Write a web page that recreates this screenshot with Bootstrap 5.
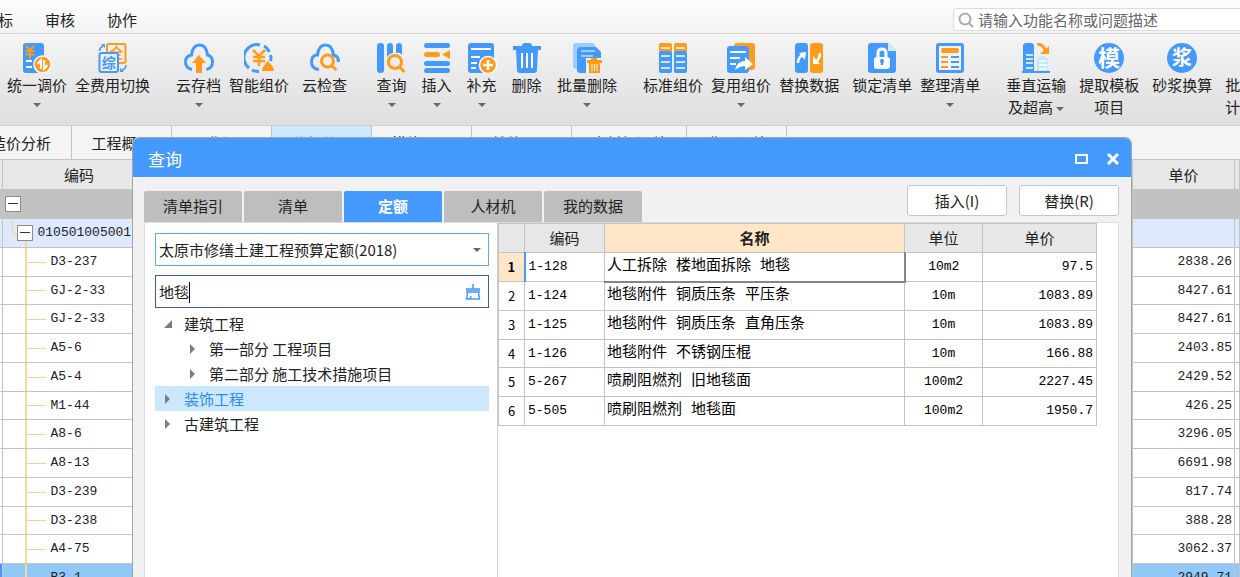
<!DOCTYPE html>
<html lang="zh-CN">
<head>
<meta charset="utf-8">
<meta name="viewport" content="width=device-width, initial-scale=1">
<title>查询</title>
<link href="https://cdn.jsdelivr.net/npm/bootstrap@5.3.0/dist/css/bootstrap.min.css" rel="stylesheet">
<style>
:root{--blue:#4499ff;--orange:#ff9a1a;--line:#c3c3c3}
body{font:15px/22px "Noto Sans CJK SC",sans-serif;color:#222;background:#fff}
button,input,select{font:inherit;color:inherit}
.plain{border:0;background:none;padding:0}
.menubar{height:34px;background:linear-gradient(#fcfcfc,#f3f3f3);border-bottom:1px solid #d5d5d5}
.menubar a{color:#222;text-decoration:none;margin-right:32px;padding-top:9px}
.menubar a:first-child{margin-left:-2px}
.finder{width:287px;height:23px;background:#fff;border:1px solid #dcdcdc;border-right:0;border-radius:4px 0 0 4px;margin-top:8px}
.finder input{background:none;border:0;outline:0;padding:0;height:21px}
.finder input::placeholder{color:#666;opacity:1}
.ribbon{height:92px;padding:9px 0 0 7px;background:linear-gradient(#f4f4f4,#dedede);border-bottom:1px solid #d0d0d0}
.tool{min-width:45px;white-space:nowrap;flex:none}
.tool svg{width:30px;height:30px;display:block;margin:0 auto 1px}
.tool .words{display:block}
.drop{display:inline-block;border:4px solid transparent;border-top-color:#666;border-bottom:0;vertical-align:middle}
.tool>.drop{display:block;width:0;margin:7px auto 0}
.g1{margin-left:8px}.g2{margin-left:13px}.g3{margin-left:22px}.g4{margin-left:26px}
svg{fill:none}
.b{fill:var(--blue)}.o{fill:var(--orange)}.w{fill:#fff}
.bs{stroke:var(--blue)}.os{stroke:var(--orange)}.ws{stroke:#fff}
.sheets{height:33px;background:#f4f4f4}
.sheets button{width:100px;border-right:1px solid #c4c4c4;white-space:nowrap;flex:none}
.sheets .first{width:72px;padding-right:20px;display:flex;justify-content:flex-end;align-items:center}
.sheets .wide{width:115px}
.sheets .on{background:#cce8ff;color:#2b88ff}
.cells{border-collapse:collapse;table-layout:fixed;width:100%}
.cells th,.cells td{border:1px solid var(--line);padding:0 4px;height:29px;line-height:20px;overflow:hidden;white-space:nowrap;font-weight:400}
.cells tr:nth-child(4n) td{height:28px}
.cells th{background:#e7e7e7;text-align:center}
.cells td{font-family:"Liberation Mono","Noto Sans CJK SC",monospace;font-size:13px}
.cells .r{text-align:right}
.cells .c{text-align:center}
.cells .hot{background:#ffe6c6}
.cost th{height:30px}
.cost th:first-child,.cost td:first-child{border-left:0;padding:0}
.cost .r{padding-right:2px}
.cost .grp td{background:#c2c2c2}
.cost .lv1 td{background-color:#dde9fd}
.cost .sel td{background-color:#92c8f7}
.cost .sel td:first-child{background:var(--blue)}
.cost .leaf{padding-left:48px;background:linear-gradient(#fcd5a0,#fcd5a0) 22px 0/2px 100% no-repeat,linear-gradient(#ffcf90,#ffcf90) 23px 50%/20px 1px no-repeat}
.cost .branch{padding-left:14px;background:linear-gradient(#fcd090,#fcd090) 9px 0/1px 50% no-repeat,linear-gradient(#fcd090,#fcd090) 9px 50%/6px 1px no-repeat,linear-gradient(#fcd5a0,#fcd5a0) 22px 100%/2px 40% no-repeat}
.cost .root{padding-left:2px}
.twist{width:16px;height:16px;background:#fff;border:1px solid #8c8c8c;padding:0 2px;display:inline-flex;align-items:center;vertical-align:middle;margin-right:5px}
.twist::before{content:"";width:10px;height:1px;background:#333}
.dialog-box{position:absolute;left:132px;right:108px;top:137px;bottom:0;border:1px solid #a3a3a3;border-bottom:0;border-radius:7px 7px 0 0;background:#f1f1f1;overflow:hidden}
.title-strip{height:39px;background:var(--blue);color:#fff;padding:3px 11px 0 15px;font-size:17px}
.title-strip svg{width:14px;height:14px;display:block}
.title-strip .gap-end{margin-right:18px}
.inner{padding:8px 12px 0 11px}
.pages{gap:2px;padding-top:6px}
.pages button{width:98px;height:31px;background:#bebebe;border-radius:2px 2px 0 0;padding-bottom:2px}
.pages .on{background:var(--blue);color:#fff;font-weight:700}
.act{width:100px;height:31px;background:#fff;border:1px solid #c6c6c6;border-radius:3px}
.pane{background:#fff;border:2px solid #dcdcdc;border-width:1px 1px 0 1px}
.side{width:353px;padding:10px 8px 0 10px;border-right:1px solid #d0d0d0;flex:none}
.picker{margin-bottom:9px}
.entry{display:block;width:100%;height:33px;border:1px solid #5ba6ff;background:#fff;padding:0 3px;border-radius:0;appearance:none;outline:0}
.typed{border-color:#34609f}
.caret{position:absolute;left:34px;top:7px;width:1px;height:21px;background:#000}
.mark-r{position:absolute;right:8px;top:15px}
.brush{position:absolute;right:8px;top:9px;width:16px;height:16px}
.outline-list{margin:3px 0 0;padding:0;list-style:none}
.outline-list li{height:25px;padding-left:8px;display:flex;align-items:center;line-height:25px}
.outline-list .sub{padding-left:33px}
.outline-list .on{background:#cce8ff;color:#2b88ff}
.outline-list svg{width:10px;height:10px;margin-right:11px;fill:#7d7d7d}
.quota{width:599px}
.quota .no{font-family:"Noto Sans CJK SC",sans-serif;text-align:center;background:#fff}
.quota td{color:#000;padding:0 3px}
.quota td.nm{font-size:15px;padding:0 2px}
.quota td.no.hot{background:#ffe6c6;font-weight:700;border-right:2px solid var(--blue)}
.quota td.pick{border:2px solid #858585;border-width:1px 2px 2px 1px;border-top-color:var(--blue)}
</style>
</head>
<body class="vh-100 overflow-hidden position-relative">

<nav class="menubar d-flex align-items-start">
  <a href="#">标</a><a href="#">审核</a><a href="#">协作</a>
  <label class="finder d-flex align-items-center ms-auto ps-1">
    <svg class="me-1" width="16" height="16" viewBox="0 0 16 16" stroke="#aaa" stroke-width="2"><circle cx="7" cy="7" r="5.5"/><path d="M11 11l4 4"/></svg>
    <input class="flex-grow-1" type="text" aria-label="搜索" placeholder="请输入功能名称或问题描述">
  </label>
</nav>

<div class="ribbon d-flex align-items-start overflow-hidden">
  <button class="tool plain"><svg viewBox="0 0 30 30"><rect class="b" x="1" width="21" height="30" rx="3"/><path class="os" stroke-width="2" d="M4 3l4 4 4-4M8 7v8M3.500 8h9M3.500 11.500h9"/><path class="ws" stroke-width="2" d="M4 18h6M4 24h6"/><circle cx="20.500" cy="21.500" r="8.500" class="o ws" stroke-width="1.500"/><path class="ws" stroke-width="2" d="M19 26v-9l-3.500 4M22 17v9l3.500-4"/></svg><span class="words">统一调价</span><i class="drop"></i></button>
  <button class="tool plain g1"><svg viewBox="0 0 30 30"><rect class="os" stroke-width="2" x="9" y="1" width="18.500" height="19" rx="2"/><text x="18.500" y="15" font-size="14" text-anchor="middle" class="o" font-weight="700">全</text><rect x="1.500" y="10" width="18.500" height="19" rx="2" fill="#f0f0f0" class="bs" stroke-width="2"/><text x="10.700" y="24.500" font-size="14" text-anchor="middle" class="b" font-weight="700">综</text><path class="bs" stroke-width="1.500" d="M1.500 8q0-3 3.500-5M28 22q0 4-4 5"/><path class="b" d="M3 1h4v4zM22 29v-4l4 4z"/></svg><span class="words">全费用切换</span></button>
  <button class="tool plain g4"><svg viewBox="0 0 30 30"><path class="bs" stroke-width="3" d="M8 26.500Q1.500 25 1.500 19t6-7q1-10 8-10t8 10q5 1 5 7t-6 7.500"/><path class="o" d="M15 12l7 8h-4v10h-6V20H8z"/></svg><span class="words">云存档</span><i class="drop"></i></button>
  <button class="tool plain g1"><svg viewBox="0 0 30 30"><path class="bs" stroke-width="3" d="M5 25A13 13 0 0 1 16 2M20 3q4 2 5 6M26.500 12q1 3 0 6M8 27q3 1.500 7 1.500"/><path class="os" stroke-width="2.500" d="M9 7l6 6 6-6M15 12v11M9 14h12M9 18h12"/><path class="o" d="M24 18q6 6 6 10H18q0-4 6-10z"/></svg><span class="words">智能组价</span></button>
  <button class="tool plain g2"><svg viewBox="0 0 30 30"><path class="bs" stroke-width="3" d="M9 26.500Q1.500 26 1.500 19t6-7q1-10 8-10t8 10q5 1 5 7"/><circle class="os" stroke-width="3" cx="17.500" cy="18" r="6"/><path class="os" stroke-width="3" d="M21.500 22.500l5 4.500"/></svg><span class="words">云检查</span></button>
  <button class="tool plain g3"><svg viewBox="0 0 30 30"><rect class="b" width="7" height="30" rx="3"/><path class="b" d="M10 3q0-3 3-3t3 3v7q-5 1-6 5zM19 3q0-3 3-3t3 3v9q-2-3-6-2z"/><circle class="os" stroke-width="3" cx="18" cy="19" r="6.500"/><path class="os" stroke-width="3" d="M22.500 24l5 5"/></svg><span class="words">查询</span><i class="drop"></i></button>
  <button class="tool plain"><svg viewBox="0 0 30 30"><g class="b"><rect x="2" width="26" height="5" rx="2.500"/><rect x="2" y="18" width="26" height="5" rx="2.500"/><rect x="2" y="25" width="26" height="5" rx="2.500"/></g><g class="o"><rect x="2" y="9" width="16" height="5" rx="2.500"/><path d="M20 11.500L28 7v9z"/></g></svg><span class="words">插入</span><i class="drop"></i></button>
  <button class="tool plain"><svg viewBox="0 0 30 30"><rect class="b" x="1" width="26" height="30" rx="3"/><path class="ws" stroke-width="2" d="M4 6h20M4 14h9M4 20h6M4 25h5"/><circle class="o ws" stroke-width="1.500" cx="21" cy="22" r="8.500"/><path class="ws" stroke-width="2.500" d="M21 17v10M16 22h10"/></svg><span class="words">补充</span><i class="drop"></i></button>
  <button class="tool plain"><svg viewBox="0 0 30 30"><path class="b" d="M1 3h9q0-3 3-3h4q3 0 3 3h9v4H1zM4 7h22l-1 20q0 3-3 3H8q-3 0-3-3z"/><path class="ws" stroke-width="2" d="M10 10v15M15 10v15M20 10v15"/></svg><span class="words">删除</span></button>
  <button class="tool plain g1"><svg viewBox="0 0 30 30"><path fill="#9dccff" d="M4 0h16q3 0 3 3v2H8q-3 2-2 21H4q-3 0-3-3V3q0-3 3-3z"/><path class="b" d="M9 4h15l5 5v18q0 3-3 3H8q-3 0-3-3V8q0-4 4-4z"/><path d="M9 8h14M9 13h12" stroke="#9dccff" stroke-width="2"/><path d="M14 15h16v15H14z" fill="#f0f0f0"/><path class="o" d="M15 17h4v-2h6v2h5v3H15zM17 20h11v10H17z"/><path class="ws" d="M20 21v7M22.500 21v7M25 21v7"/></svg><span class="words">批量删除</span><i class="drop"></i></button>
  <button class="tool plain g4"><svg viewBox="0 0 30 30"><rect class="o" x="1" width="13" height="10" rx="2"/><rect class="o" x="16" width="13" height="10" rx="2"/><rect class="b" x="1" y="8" width="13" height="22" rx="2"/><rect class="b" x="16" y="8" width="13" height="22" rx="2"/><path class="ws" stroke-width="1.600" d="M3 5h9M3 13h9M3 19h9M3 25h9M18 5h9M18 13h9M18 19h9M18 25h9"/></svg><span class="words">标准组价</span></button>
  <button class="tool plain g1"><svg viewBox="0 0 30 30"><rect class="o" x="8" width="21" height="27" rx="3"/><rect class="b" x="1" y="3" width="22" height="27" rx="3"/><path class="ws" stroke-width="2" d="M4 9h16M4 15h10M4 21h6"/><path class="w" d="M9 27q2-9 10-9v-4l8 7-8 6v-4q-5 0-10 4z"/></svg><span class="words">复用组价</span><i class="drop"></i></button>
  <button class="tool plain g1"><svg viewBox="0 0 30 30"><rect class="b" x="1" width="13" height="30" rx="3"/><rect class="o" x="16" width="13" height="30" rx="3"/><path class="ws" stroke-width="2.500" d="M4 20q0-6 5-8M26 10q0 6-5 9"/><path class="w" d="M5 10l7-1-1 8zM19 13v8h7z"/></svg><span class="words">替换数据</span></button>
  <button class="tool plain g2"><svg viewBox="0 0 30 30"><path class="b" d="M4 0h17l8 8v19q0 3-3 3H4q-3 0-3-3V3q0-3 3-3z"/><path fill="#d5eaff" d="M21 0l8 8h-8z"/><rect class="w" x="7" y="14" width="16" height="12" rx="3"/><path class="ws" stroke-width="3" d="M11 15V10q0-4 4-4t4 4v5"/><path class="bs" stroke-width="2.500" d="M15 16v6"/><circle class="b" cx="15" cy="18" r="2"/></svg><span class="words">锁定清单</span></button>
  <button class="tool plain g1"><svg viewBox="0 0 30 30"><rect class="b" x="1" width="28" height="30" rx="3"/><rect x="4" y="3" width="22" height="24" fill="#f4f4f4"/><rect class="o" x="6" y="5" width="18" height="5" rx="2"/><path class="os" stroke-width="2" d="M6 14h7M6 19h7M6 24h7"/><path class="bs" stroke-width="2" d="M16 14h8M16 19h8M16 24h8"/></svg><span class="words">整理清单</span><i class="drop"></i></button>
  <button class="tool plain g4"><svg viewBox="0 0 30 30"><path class="b" d="M4 0h6q3 0 3 3v25h16v2H1v-2h1V2z"/><path fill="#c7e3ff" d="M16 16q5-6 11 0v12H16z"/><path class="ws" stroke-width="1.600" d="M5 12h7M5 16h7M5 20h7M5 25h7M18 18h8M18 22h8M18 26h8"/><path class="os" stroke-width="3" d="M16 1q6 0 8 6"/><path class="o" d="M28 3v8h-9z"/></svg><span class="words">垂直运输<br>及超高 <i class="drop"></i></span></button>
  <button class="tool plain g2"><svg viewBox="0 0 30 30"><circle class="b" cx="15" cy="15" r="15"/><text class="w" x="15" y="23" font-size="22" font-weight="700" text-anchor="middle">模</text></svg><span class="words">提取模板<br>项目</span></button>
  <button class="tool plain g2"><svg viewBox="0 0 30 30"><circle class="b" cx="15" cy="15" r="15"/><text class="w" x="15" y="22" font-size="20" font-weight="700" text-anchor="middle">浆</text></svg><span class="words">砂浆换算</span></button>
  <button class="tool plain g2 text-start"><svg viewBox="0 0 30 30"></svg><span class="words">批<br>计</span></button>
</div>

<div class="sheets d-flex overflow-hidden">
  <button class="plain first">造价分析</button><button class="plain">工程概况</button><button class="plain">取费设置</button><button class="plain on">分部分项</button><button class="plain">措施项目</button><button class="plain">其他项目</button><button class="plain wide">人材机汇总</button><button class="plain">费用汇总</button>
</div>

<table class="cells cost">
  <colgroup><col style="width:2px"><col style="width:154px"><col><col style="width:102px"><col style="width:5px"></colgroup>
  <thead><tr><th></th><th>编码</th><th class="hot"></th><th>单价</th><th></th></tr></thead>
  <tbody>
  <tr class="grp"><td></td><td class="root"><button class="twist" aria-label="折叠"></button></td><td></td><td></td><td></td></tr>
  <tr class="lv1"><td></td><td class="branch"><button class="twist" aria-label="折叠"></button>010501005001</td><td></td><td></td><td></td></tr>
  <tr><td></td><td class="leaf">D3-237</td><td></td><td class="r">2838.26</td><td></td></tr>
  <tr><td></td><td class="leaf">GJ-2-33</td><td></td><td class="r">8427.61</td><td></td></tr>
  <tr><td></td><td class="leaf">GJ-2-33</td><td></td><td class="r">8427.61</td><td></td></tr>
  <tr><td></td><td class="leaf">A5-6</td><td></td><td class="r">2403.85</td><td></td></tr>
  <tr><td></td><td class="leaf">A5-4</td><td></td><td class="r">2429.52</td><td></td></tr>
  <tr><td></td><td class="leaf">M1-44</td><td></td><td class="r">426.25</td><td></td></tr>
  <tr><td></td><td class="leaf">A8-6</td><td></td><td class="r">3296.05</td><td></td></tr>
  <tr><td></td><td class="leaf">A8-13</td><td></td><td class="r">6691.98</td><td></td></tr>
  <tr><td></td><td class="leaf">D3-239</td><td></td><td class="r">817.74</td><td></td></tr>
  <tr><td></td><td class="leaf">D3-238</td><td></td><td class="r">388.28</td><td></td></tr>
  <tr><td></td><td class="leaf">A4-75</td><td></td><td class="r">3062.37</td><td></td></tr>
  <tr class="sel"><td></td><td class="leaf">B3-1</td><td></td><td class="r">2949.71</td><td></td></tr>
  </tbody>
</table>

<section class="dialog-box d-flex flex-column" role="dialog" aria-label="查询">
  <header class="title-strip d-flex align-items-center">
    <span class="me-auto">查询</span>
    <button class="plain gap-end" aria-label="最大化"><svg viewBox="0 0 14 14"><rect x="2" y="3" width="11" height="8" class="ws" stroke-width="2"/></svg></button>
    <button class="plain" aria-label="关闭"><svg viewBox="0 0 14 14"><path class="ws" stroke-width="3" d="M2 2l10 10M12 2L2 12"/></svg></button>
  </header>
  <div class="inner d-flex flex-column flex-grow-1">
    <div class="d-flex align-items-start">
      <div class="pages d-flex me-auto">
        <button class="plain">清单指引</button><button class="plain">清单</button><button class="plain on">定额</button><button class="plain">人材机</button><button class="plain">我的数据</button>
      </div>
      <button class="act me-2">插入(I)</button><button class="act ms-1">替换(R)</button>
    </div>
    <div class="pane d-flex flex-grow-1">
      <div class="side">
        <div class="position-relative picker">
          <select class="entry" aria-label="定额库"><option>太原市修缮土建工程预算定额(2018)</option></select>
          <i class="drop mark-r"></i>
        </div>
        <div class="position-relative">
          <input class="entry typed" type="text" aria-label="查询内容" value="地毯">
          <span class="caret"></span>
          <svg class="brush" viewBox="0 0 16 16"><path class="b" d="M7 0h2v4h6v5H1V4h6z" opacity=".8"/><path class="bs" stroke-width="1.500" d="M2.500 9L1.500 15h13l-1-6M5 15l1-3"/></svg>
        </div>
        <ul class="outline-list">
          <li><svg viewBox="0 0 10 10"><path d="M9 1v8H1z"/></svg>建筑工程</li>
          <li class="sub"><svg viewBox="0 0 10 10"><path d="M2 0l5 5-5 5z"/></svg>第一部分 工程项目</li>
          <li class="sub"><svg viewBox="0 0 10 10"><path d="M2 0l5 5-5 5z"/></svg>第二部分 施工技术措施项目</li>
          <li class="on"><svg viewBox="0 0 10 10"><path d="M2 0l5 5-5 5z"/></svg>装饰工程</li>
          <li><svg viewBox="0 0 10 10"><path d="M2 0l5 5-5 5z"/></svg>古建筑工程</li>
        </ul>
      </div>
      <div class="flex-grow-1">
        <table class="cells quota">
          <colgroup><col style="width:26px"><col style="width:80px"><col><col style="width:78px"><col style="width:114px"></colgroup>
          <thead><tr><th></th><th>编码</th><th class="hot fw-bold">名称</th><th>单位</th><th>单价</th></tr></thead>
          <tbody>
          <tr><td class="no hot">1</td><td>1-128</td><td class="nm pick">人工拆除 楼地面拆除 地毯</td><td class="c">10m2</td><td class="r">97.5</td></tr>
          <tr><td class="no">2</td><td>1-124</td><td class="nm">地毯附件 铜质压条 平压条</td><td class="c">10m</td><td class="r">1083.89</td></tr>
          <tr><td class="no">3</td><td>1-125</td><td class="nm">地毯附件 铜质压条 直角压条</td><td class="c">10m</td><td class="r">1083.89</td></tr>
          <tr><td class="no">4</td><td>1-126</td><td class="nm">地毯附件 不锈钢压棍</td><td class="c">10m</td><td class="r">166.88</td></tr>
          <tr><td class="no">5</td><td>5-267</td><td class="nm">喷刷阻燃剂 旧地毯面</td><td class="c">100m2</td><td class="r">2227.45</td></tr>
          <tr><td class="no">6</td><td>5-505</td><td class="nm">喷刷阻燃剂 地毯面</td><td class="c">100m2</td><td class="r">1950.7</td></tr>
          </tbody>
        </table>
      </div>
    </div>
  </div>
</section>
<script src="https://cdn.jsdelivr.net/npm/bootstrap@5.3.0/dist/js/bootstrap.bundle.min.js"></script>
</body>
</html>
